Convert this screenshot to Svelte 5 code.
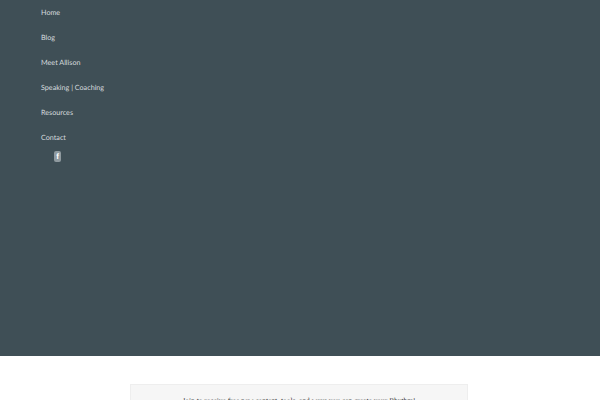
<script>
    let links = ['Home', 'Blog', 'Meet Allison', 'Speaking | Coaching', 'Resources', 'Contact'];
</script>

<style>
    :global(body) {
        background: #fff;
        overflow: hidden;
        text-rendering: geometricPrecision;
    }

    .page {
        height: 400px;
        overflow: hidden;
    }

    .hero {
        height: 356px;
        background: #3f4f56;
        padding-left: 41px;
        box-sizing: border-box;
    }

    ul {
        list-style: none;
        margin: 0;
        padding: 0;
    }

    li {
        height: 25px;
        line-height: 25px;
        font-family: 'Lato', sans-serif;
        font-size: 7.2px;
        color: #d5dbde;
    }

    .social {
        display: flex;
        justify-content: center;
        align-items: center;
        width: 7px;
        height: 11px;
        margin: 1px 0 0 13px;
        border-radius: 2px;
        background: #8f9a9f;
        color: #fff;
        font-family: 'Liberation Sans', sans-serif;
        font-weight: bold;
        font-size: 8px;
        line-height: 11px;
    }

    .signup {
        display: flex;
        justify-content: center;
        padding-top: 28px;
        padding-right: 2px;
    }

    .box {
        width: 338px;
        height: 40px;
        box-sizing: border-box;
        padding-top: 11px;
        background: #f6f6f6;
        border: 1px solid #eeeeee;
        text-align: center;
        font-family: 'Liberation Serif', serif;
        font-size: 7.45px;
        color: #333;
    }
</style>

<div class="page">
    <div class="hero">
        <ul>
            {#each links as link}
                <li>{link}</li>
            {/each}
        </ul>
        <div class="social">f</div>
    </div>
    <div class="signup">
        <div class="box">Join to receive free new content, tools, and ways you can create your Rhythm!</div>
    </div>
</div>
